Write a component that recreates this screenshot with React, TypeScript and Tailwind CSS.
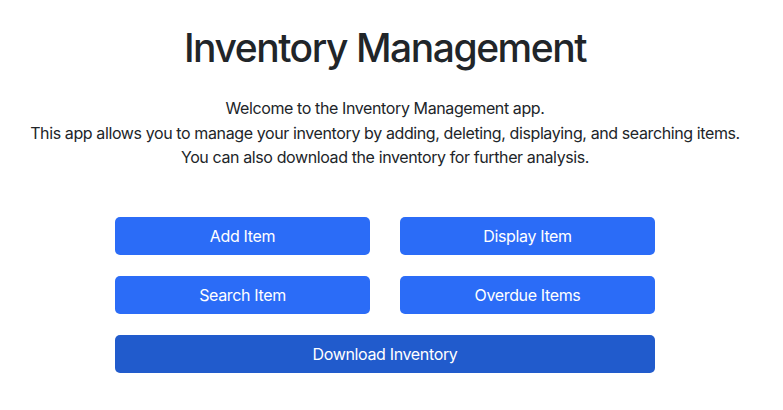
import React from 'react';

const buttons = ['Add Item', 'Display Item', 'Search Item', 'Overdue Items'];

export default function App() {
  return (
    <div className="min-h-screen bg-white pr-[13px] font-['Inter',sans-serif] text-[#212529]">
      <div className="flex flex-col items-center pt-[24px]">
        <h1 className="text-[39px] leading-[48px] font-medium tracking-[-1.45px]">Inventory Management</h1>

        <div className="mt-[24px] text-center text-[16px] leading-[24.5px] tracking-[-0.39px]">
          <p>Welcome to the Inventory Management app.</p>
          <p>This app allows you to manage your inventory by adding, deleting, displaying, and searching items.</p>
          <p>You can also download the inventory for further analysis.</p>
        </div>

        <div className="mt-[47px] grid w-[540px] grid-cols-2 gap-x-[30px] gap-y-[21px]">
          {buttons.map(label => (
            <button
              key={label}
              type="button"
              className="h-[38px] rounded-[5px] bg-[#2b6cf7] text-[16px] tracking-[-0.35px] text-white"
            >
              {label}
            </button>
          ))}
          <button
            type="button"
            className="col-span-2 h-[38px] rounded-[5px] bg-[#215bcc] text-[16px] tracking-[-0.35px] text-white"
          >
            Download Inventory
          </button>
        </div>
      </div>
    </div>
  );
}
